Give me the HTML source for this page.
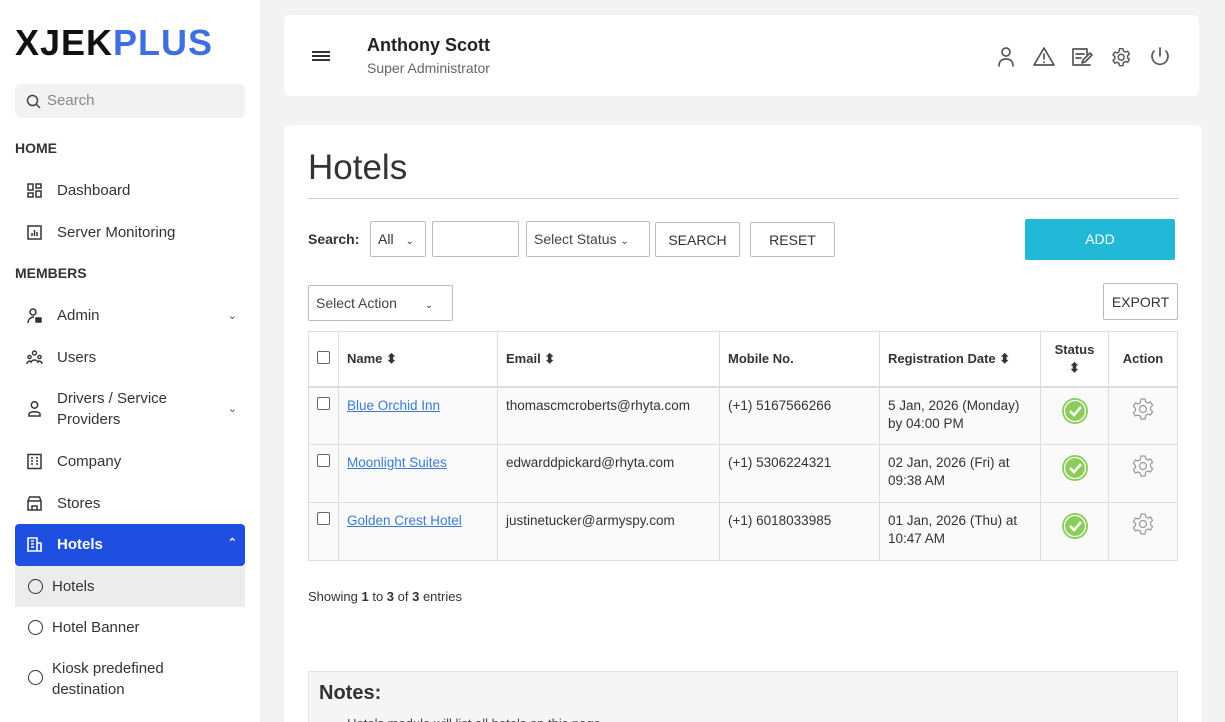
<!DOCTYPE html>
<html><head><style>
*{box-sizing:border-box;margin:0;padding:0}
html,body{width:1225px;height:722px;overflow:hidden}
body{background:#f3f3f4;font-family:"Liberation Sans",sans-serif;color:#333;position:relative}
.sb{position:absolute;left:0;top:0;width:260px;height:722px;background:#fff}
.logo{position:absolute;left:15px;top:22px;font-size:36px;font-weight:bold;letter-spacing:1px;color:#111}
.logo span{color:#3e6fe0}
.srch{position:absolute;left:15px;top:84px;width:230px;height:34px;background:#f2f2f2;border-radius:6px;color:#888;font-size:15px;padding:8px 0 0 32px}
.sec{position:absolute;left:15px;font-size:14px;font-weight:bold;color:#333}
.it{position:absolute;left:15px;width:230px;font-size:15px;color:#333;padding-left:42px;line-height:21px}
.ic{position:absolute;left:11px;top:2px;width:17px;height:17px}
.act{background:#1f4fe0;color:#fff;font-weight:bold;border-radius:4px;height:42px;padding-top:10px}
.sub{background:#ececec;height:41px;padding-top:10px;padding-left:37px}
.circ{position:absolute;left:13px;top:13px;width:15px;height:15px;border:1.6px solid #333;border-radius:50%}
.chev{position:absolute;right:8px;font-size:11px;color:#555}
.top{position:absolute;left:284px;top:15px;width:915px;height:81px;background:#fff;border-radius:6px}
.main{position:absolute;left:284px;top:125px;width:918px;height:620px;background:#fff;border-radius:6px}
.btn{position:absolute;border:1px solid #bbb;background:#fff;font-size:14px;color:#333;text-align:center;border-radius:2px}
table{position:absolute;left:308px;top:331px;border-collapse:collapse;font-size:13.5px}
td,th{border:1px solid #ddd;vertical-align:top}
th{font-weight:bold;text-align:left;vertical-align:middle;height:55px;padding:0 8px;font-size:13px}
td{height:58px;padding:9px 8px;background:#fafafa;line-height:18px}
a{color:#3a7bd5}
.cb{display:inline-block;width:13px;height:13px;border:1px solid #666;border-radius:2px;background:#fff}
</style></head><body>
<svg width="0" height="0" style="position:absolute"><defs>
<symbol id="gear" viewBox="0 0 24 24"><path fill="none" stroke-linejoin="round" d="M10 2h4l.7 2.8 2.2 1.2 2.7-1 2 3.4-2.1 1.9v2.4l2.1 1.9-2 3.4-2.7-1-2.2 1.2L14 22h-4l-.7-2.8-2.2-1.2-2.7 1-2-3.4 2.1-1.9v-2.4L2.4 9.4l2-3.4 2.7 1 2.2-1.2z"/><circle cx="12" cy="12" r="3.5" fill="none"/></symbol>
<symbol id="ok" viewBox="0 0 28 28"><circle cx="14" cy="14" r="13" fill="#8ccc5c"/><circle cx="14" cy="14" r="10.5" fill="none" stroke="#fff" stroke-width="1.2"/><path d="M9 14l4 4 7-8" fill="none" stroke="#fff" stroke-width="2.5"/></symbol>
</defs></svg>
<div class="sb">
<div class="logo">XJEK<span>PLUS</span></div>
<div class="srch"><svg style="position:absolute;left:11px;top:10px" width="15" height="15" viewBox="0 0 15 15"><circle cx="6.5" cy="6.5" r="5" fill="none" stroke="#444" stroke-width="1.5"/><path d="M10 10l4 4" stroke="#444" stroke-width="1.5"/></svg>Search</div>
<div class="sec" style="top:140px">HOME</div>
<div class="it" style="top:180px"><svg class="ic" viewBox="0 0 17 17" fill="none" stroke="#333" stroke-width="1.5"><rect x="2" y="2" width="5" height="6"/><rect x="10" y="2" width="5" height="4"/><rect x="2" y="11" width="5" height="4"/><rect x="10" y="9" width="5" height="6"/></svg>Dashboard</div>
<div class="it" style="top:222px"><svg class="ic" viewBox="0 0 17 17" fill="none" stroke="#333" stroke-width="1.5"><rect x="2" y="2" width="13" height="13"/><path d="M6 12V9M8.5 12V6M11 12V8"/></svg>Server Monitoring</div>
<div class="sec" style="top:265px">MEMBERS</div>
<div class="it" style="top:305px"><svg class="ic" viewBox="0 0 17 17" fill="none" stroke="#333" stroke-width="1.5"><circle cx="7" cy="5" r="3"/><path d="M2 16c0-4 3-6 6-6"/><rect x="10" y="11" width="5" height="4" fill="#333"/></svg>Admin<span class="chev" style="top:1px">⌄</span></div>
<div class="it" style="top:347px"><svg class="ic" viewBox="0 0 17 17" fill="none" stroke="#333" stroke-width="1.4"><circle cx="8.5" cy="4" r="2"/><circle cx="3.5" cy="8" r="1.6"/><circle cx="13.5" cy="8" r="1.6"/><path d="M5 14c0-4 7-4 7 0M1 15c0-3 3-3 4-3M16 15c0-3-3-3-4-3"/></svg>Users</div>
<div class="it" style="top:388px"><svg class="ic" style="top:12px" viewBox="0 0 17 17" fill="none" stroke="#333" stroke-width="1.5"><circle cx="8.5" cy="5" r="3.2"/><path d="M3 16v-2c0-3 11-3 11 0v2z"/></svg>Drivers / Service<br>Providers<span class="chev" style="top:11px">⌄</span></div>
<div class="it" style="top:451px"><svg class="ic" viewBox="0 0 17 17" fill="none" stroke="#333" stroke-width="1.5"><rect x="2" y="1.5" width="13" height="14"/><path d="M5 5h2M10 5h2M5 8h2M10 8h2M5 11h2M10 11h2"/></svg>Company</div>
<div class="it" style="top:493px"><svg class="ic" viewBox="0 0 17 17" fill="none" stroke="#333" stroke-width="1.5"><path d="M2 6l1.5-4h10L15 6v9H2z M2 6h13M6 15v-4h5v4"/></svg>Stores</div>
<div class="it act" style="top:524px"><svg class="ic" style="top:12px" viewBox="0 0 17 17" fill="none" stroke="#fff" stroke-width="1.6"><path d="M2 15V2h9v13M11 7h4v8M1 15h15M5 5h3M5 8h3M5 11h3"/></svg>Hotels<span class="chev" style="top:9px;color:#fff">⌃</span></div>
<div class="it sub" style="top:566px"><span class="circ"></span>Hotels</div>
<div class="it sub" style="top:607px;background:none"><span class="circ"></span>Hotel Banner</div>
<div class="it" style="top:658px;padding-left:37px"><span class="circ" style="top:12px"></span>Kiosk predefined<br>destination</div>
</div>

<div class="top">
<div style="position:absolute;left:28px;top:36px;width:18px;height:2px;background:#333;box-shadow:0 4px 0 #333,0 8px 0 #333"></div>
<div style="position:absolute;left:83px;top:20px;font-size:18px;font-weight:bold;color:#222">Anthony Scott</div>
<div style="position:absolute;left:83px;top:45px;font-size:14px;color:#666">Super Administrator</div>
<svg style="position:absolute;left:710px;top:30px" width="180" height="24" viewBox="0 0 180 24" fill="none" stroke="#555" stroke-width="1.7" stroke-linecap="round" stroke-linejoin="round">
<circle cx="12" cy="7" r="4"/><path d="M5 21c0-5 3-7 7-7s7 2 7 7"/>
<path d="M50 3L40 20h20z M50 9v5M50 17v0.5"/>
<path d="M96 20H79V4h14v6M82 9h8M82 13h5M88 18l1-3 7-7 2 2-7 7z"/>
<g transform="translate(117 2) scale(0.85)"><use href="#gear" width="24" height="24"/></g>
<path d="M166 3v8M160 6a8 8 0 1 0 12 0"/>
</svg>
</div>

<div class="main">
<div style="position:absolute;left:24px;top:23px;font-size:35px;color:#333">Hotels</div>
<div style="position:absolute;left:24px;top:73px;width:870px;height:1px;background:#ccc"></div>
</div>
<div style="position:absolute;left:308px;top:231px;font-size:14px;font-weight:bold">Search:</div>
<div class="btn" style="left:370px;top:221px;width:56px;height:36px;padding-top:9px;text-align:left;padding-left:7px">All <span style="font-size:10px;margin-left:8px">⌄</span></div>
<div class="btn" style="left:432px;top:221px;width:87px;height:36px"></div>
<div class="btn" style="left:526px;top:221px;width:124px;height:36px;padding-top:9px;text-align:left;padding-left:7px;color:#444">Select Status <span style="font-size:10px">⌄</span></div>
<div class="btn" style="left:655px;top:222px;width:85px;height:35px;padding-top:9px">SEARCH</div>
<div class="btn" style="left:750px;top:222px;width:85px;height:35px;padding-top:9px">RESET</div>
<div style="position:absolute;left:1025px;top:219px;width:150px;height:41px;background:#22b8d8;color:#fff;font-size:14px;text-align:center;padding-top:12px;border-radius:2px">ADD</div>
<div class="btn" style="left:308px;top:285px;width:145px;height:36px;padding-top:9px;text-align:left;padding-left:7px;color:#444">Select Action <span style="font-size:10px;margin-left:24px">⌄</span></div>
<div class="btn" style="left:1103px;top:283px;width:75px;height:37px;padding-top:10px">EXPORT</div>

<table>
<tr style="border-bottom:2px solid #ddd"><th style="width:30px;padding:0 8px"><span class="cb"></span></th><th style="width:159px">Name ⬍</th><th style="width:222px">Email ⬍</th><th style="width:160px">Mobile No.</th><th style="width:161px">Registration Date ⬍</th><th style="width:68px;text-align:center;line-height:18px">Status<br>⬍</th><th style="width:69px;text-align:center">Action</th></tr>
<tr><td><span class="cb"></span></td><td><a href="#">Blue Orchid Inn</a></td><td>thomascmcroberts@rhyta.com</td><td>(+1) 5167566266</td><td>5 Jan, 2026 (Monday) by 04:00 PM</td><td style="text-align:center"><svg width="28" height="28"><use href="#ok"/></svg></td><td style="text-align:center"><svg width="24" height="24" stroke="#999" stroke-width="1.2"><use href="#gear"/></svg></td></tr>
<tr><td><span class="cb"></span></td><td><a href="#">Moonlight Suites</a></td><td>edwarddpickard@rhyta.com</td><td>(+1) 5306224321</td><td>02 Jan, 2026 (Fri) at 09:38 AM</td><td style="text-align:center"><svg width="28" height="28"><use href="#ok"/></svg></td><td style="text-align:center"><svg width="24" height="24" stroke="#999" stroke-width="1.2"><use href="#gear"/></svg></td></tr>
<tr><td><span class="cb"></span></td><td><a href="#">Golden Crest Hotel</a></td><td>justinetucker@armyspy.com</td><td>(+1) 6018033985</td><td>01 Jan, 2026 (Thu) at 10:47 AM</td><td style="text-align:center"><svg width="28" height="28"><use href="#ok"/></svg></td><td style="text-align:center"><svg width="24" height="24" stroke="#999" stroke-width="1.2"><use href="#gear"/></svg></td></tr>
</table>
<div style="position:absolute;left:308px;top:589px;font-size:13px">Showing <b>1</b> to <b>3</b> of <b>3</b> entries</div>
<div style="position:absolute;left:308px;top:671px;width:870px;height:60px;background:#f5f5f5;border:1px solid #e2e2e2">
<div style="position:absolute;left:10px;top:10px;font-size:20px;font-weight:bold;color:#333">Notes:</div>
<div style="position:absolute;left:30px;top:44px;font-size:13px;color:#444">• Hotels module will list all hotels on this page.</div></div>
</body></html>
